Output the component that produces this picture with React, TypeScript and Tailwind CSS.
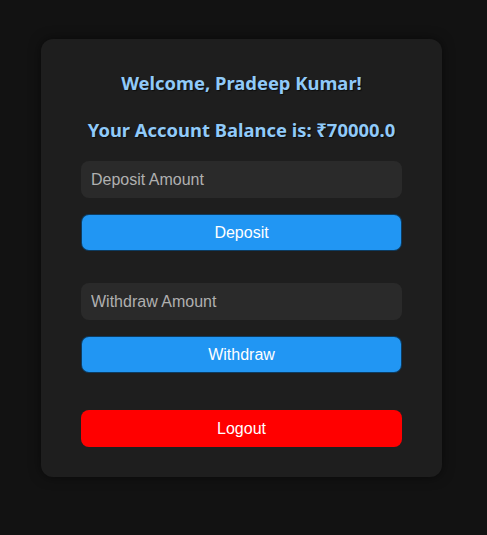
export default function App() {
  return (
    <div className="min-h-[535px] bg-[#121212] pt-[39px] pl-[41px]">
      <div className="flex w-[401px] flex-col rounded-[12px] bg-[#1e1e1e] px-[40px] pt-[32px] pb-[30px] shadow-[0_0_12px_rgba(0,0,0,0.5)]">
        <h2 className="text-center font-['Noto_Sans',sans-serif] text-[18.4px] leading-[24px] font-bold text-[#90caf9] [text-shadow:1px_1px_1px_rgba(0,0,0,0.6)]">
          Welcome, Pradeep Kumar!
        </h2>
        <h3 className="mt-[23px] text-center font-['Noto_Sans',sans-serif] text-[18.4px] leading-[24px] font-bold text-[#90caf9] [text-shadow:1px_1px_1px_rgba(0,0,0,0.6)]">
          Your Account Balance is: ₹70000.0
        </h3>

        <input
          type="number"
          placeholder="Deposit Amount"
          className="mt-[19px] h-[37px] w-full rounded-[8px] bg-[#2a2a2a] px-[10px] font-['Liberation_Sans',Arial,sans-serif] text-[16px] text-white outline-none placeholder:text-[#b0b0b0]"
        />
        <button
          type="button"
          className="mt-[16px] h-[37px] w-full rounded-[8px] border border-black/60 bg-[#2196f3] font-['Liberation_Sans',Arial,sans-serif] text-[16px] text-white"
        >
          Deposit
        </button>

        <input
          type="number"
          placeholder="Withdraw Amount"
          className="mt-[32px] h-[37px] w-full rounded-[8px] bg-[#2a2a2a] px-[10px] font-['Liberation_Sans',Arial,sans-serif] text-[16px] text-white outline-none placeholder:text-[#b0b0b0]"
        />
        <button
          type="button"
          className="mt-[16px] h-[37px] w-full rounded-[8px] border border-black/60 bg-[#2196f3] font-['Liberation_Sans',Arial,sans-serif] text-[16px] text-white"
        >
          Withdraw
        </button>

        <button
          type="button"
          className="mt-[37px] h-[37px] w-full rounded-[8px] bg-[#ff0000] font-['Liberation_Sans',Arial,sans-serif] text-[16px] text-white"
        >
          Logout
        </button>
      </div>
    </div>
  );
}
